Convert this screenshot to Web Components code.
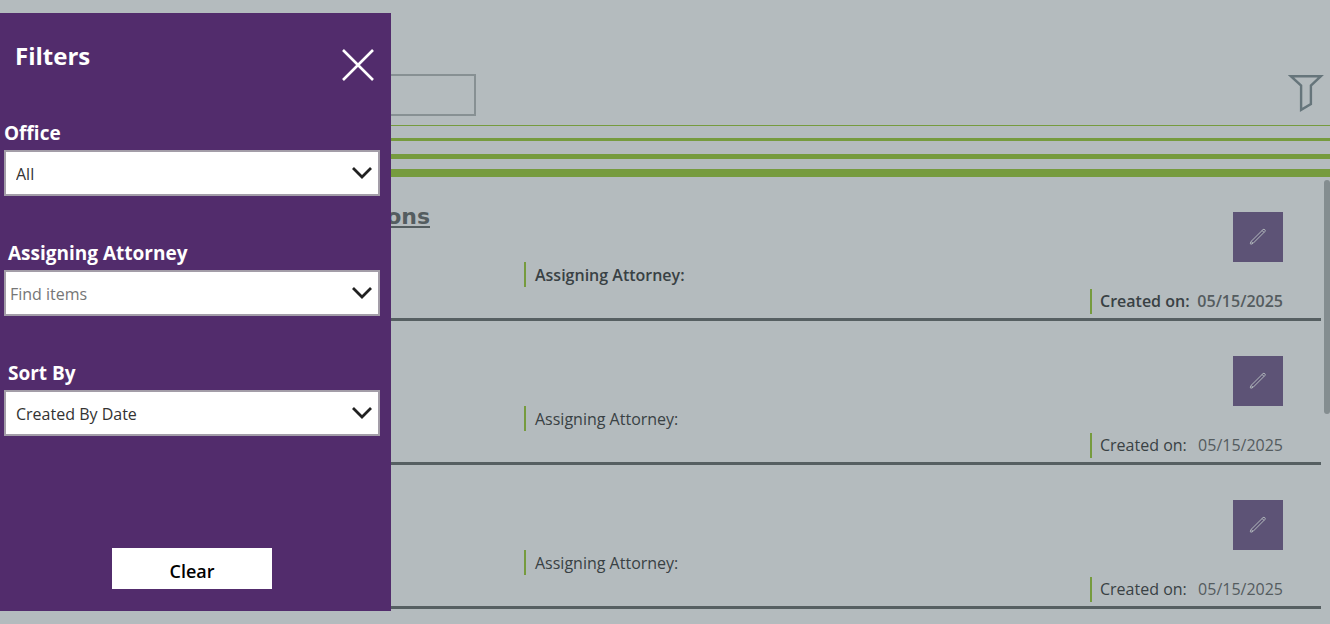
<!DOCTYPE html>
<html lang="en">
<head>
<meta charset="utf-8">
<title>Assignments</title>
<style>
  html, body { margin: 0; min-height: 100%; }
  body {
    background: #b4bbbe;
    color: #394144;
    font-family: "Open Sans", "Noto Sans", sans-serif;
    font-size: 16px;
    overflow: hidden;
    --green: #769b3e;
    --purple: #522c6c;
  }
</style>
</head>
<body>
<app-shell>
  <top-bar></top-bar>
  <stripe-rule></stripe-rule>
  <assignment-list>
    <assignment-row current heading="ons" date="05/15/2025"></assignment-row>
    <assignment-row date="05/15/2025"></assignment-row>
    <assignment-row date="05/15/2025"></assignment-row>
  </assignment-list>
  <filter-panel slot="overlay">
    <filter-select flush label="Office" value="All"></filter-select>
    <filter-combo label="Assigning Attorney" placeholder="Find items"></filter-combo>
    <filter-select label="Sort By" value="Created By Date"></filter-select>
  </filter-panel>
</app-shell>

<script>
const define = (name, render) => customElements.define(name, class extends HTMLElement {
  connectedCallback() {
    if (!this.shadowRoot) this.attachShadow({ mode: "open" }).innerHTML = render(this);
  }
});

define("app-shell", () => `
  <style>
    :host { display: block; position: relative; min-height: 100vh; }
    .overlay { position: absolute; left: 0; top: 13px; }
  </style>
  <main><slot></slot></main>
  <div class="overlay"><slot name="overlay"></slot></div>`);

define("top-bar", () => `
  <style>
    :host { display: flex; justify-content: space-between; align-items: flex-start; box-sizing: border-box; height: 125px; padding: 74px 6px 0 16px; }
    input { box-sizing: border-box; width: 460px; height: 42px; border: 2px solid #879093; background: transparent; font: inherit; padding: 0 8px; }
    button { border: 0; padding: 0; background: none; display: block; }
    svg { display: block; }
  </style>
  <input type="search" aria-label="Search">
  <button type="button" aria-label="Show filters">
    <svg width="36" height="38" viewBox="0 0 36 38" fill="none" stroke="#66757b" stroke-width="2.4"><path d="M2.9 2.2H32.9L22.9 11.6V30L13.1 35.8V11.6Z"/></svg>
  </button>`);

define("stripe-rule", () => `
  <style>
    :host { display: grid; grid-template-rows: 13px 16px 15px 8px; align-items: start; }
    .line { background: var(--green); height: 1px; }
    .thin { height: 3px; }
    .medium { height: 5px; }
    .thick { height: 8px; }
  </style>
  <div class="line"></div><div class="line thin"></div><div class="line medium"></div><div class="line thick"></div>`);

define("assignment-list", () => `
  <style>
    :host { display: block; position: relative; padding-right: 9px; }
    .thumb { position: absolute; right: 0; top: 3px; width: 6px; height: 234px; border-radius: 3px; background: #848d90; }
  </style>
  <slot></slot>
  <div class="thumb"></div>`);

define("assignment-row", el => `
  <style>
    :host { display: grid; grid-template-columns: 524fr 566fr 193px; box-sizing: border-box; height: 144px; padding-right: 38px; border-bottom: 3px solid #565f62; }
    .title { display: grid; justify-items: end; align-items: start; padding: 27px 94px 0 0; }
    a { font: bold 22px/26px "DejaVu Sans", sans-serif; color: #545d60; text-decoration: underline; text-decoration-thickness: 2px; text-underline-offset: 2px; }
    .field { display: flex; align-items: center; box-sizing: border-box; height: 25px; padding-left: 9px; border-left: 2px solid var(--green); font-size: 16px; line-height: 25px; white-space: nowrap; }
    .attorney { margin-top: 85px; padding-top: 2px; }
    .side { display: flex; flex-direction: column; gap: 27px; padding-top: 35px; }
    .side .field { justify-content: space-between; padding-left: 8px; }
    time { color: #545c5f; }
    button { align-self: flex-end; width: 50px; height: 50px; border: 0; padding: 0; background: #5d5376; display: grid; place-items: center; }
    :host([current]) .label { font-weight: 600; }
    :host([current]) time { font-weight: 600; }
  </style>
  <div class="title">${el.getAttribute("heading") ? `<a href="#">${el.getAttribute("heading")}</a>` : ""}</div>
  <div class="field attorney"><span class="label">Assigning Attorney:</span></div>
  <div class="side">
    <button type="button" aria-label="Edit"><svg width="18" height="18" viewBox="0 0 18 18" fill="none" stroke="#b4bbbe" stroke-width="1"><path d="M1.4 15.3L2 13.5L14 1.6Q15 .9 15.8 1.7Q16.6 2.5 15.9 3.5L4 15.4L2 16.2Q1.2 16.2 1.4 15.3ZM13.2 2.6L14.9 4.3M2.4 13.7L3.8 15.1"/></svg></button>
    <div class="field"><span class="label">Created on:</span><time datetime="2025-05-15">${el.getAttribute("date")}</time></div>
  </div>`);

const fieldStyles = `
  :host { display: block; }
  label { display: block; padding-left: 4px; margin-bottom: 4px; font-size: 19px; line-height: 26px; font-weight: 700; color: #fff; }
  :host([flush]) label { padding-left: 0; }
  .box { position: relative; }
  .box svg { position: absolute; right: 7px; top: 15px; pointer-events: none; }
  select, input { box-sizing: border-box; display: block; width: 100%; height: 46px; margin: 0; border: 2px solid #a39da8; border-radius: 0; background: #fff; appearance: none; font: 16px/24px "Open Sans", "Noto Sans", sans-serif; color: #333; outline: 0; }
  select { padding: 2px 40px 0 10px; }
  input { padding: 1px 40px 0 4px; }
  input::placeholder { color: #767676; opacity: 1; }`;
const chevron = `<svg width="22" height="16" viewBox="0 0 22 16" fill="none" stroke="#212121" stroke-width="2.8"><path d="M2 3L11 12L20 3"/></svg>`;

define("filter-select", el => `
  <style>${fieldStyles}</style>
  <label for="control">${el.getAttribute("label")}</label>
  <div class="box"><select id="control"><option>${el.getAttribute("value")}</option></select>${chevron}</div>`);

define("filter-combo", el => `
  <style>${fieldStyles}</style>
  <label for="control">${el.getAttribute("label")}</label>
  <div class="box"><input id="control" type="text" placeholder="${el.getAttribute("placeholder")}">${chevron}</div>`);

define("filter-panel", () => `
  <style>
    :host { display: block; box-sizing: border-box; width: 391px; padding: 0 11px 22px 4px; background: var(--purple); color: #fff; }
    header { display: flex; justify-content: space-between; align-items: flex-start; height: 107px; padding: 0 5px 0 11px; box-sizing: border-box; }
    h2 { margin: 26px 0 0; font-size: 24px; line-height: 34px; font-weight: 700; }
    button { font: inherit; border: 0; padding: 0; }
    .close { margin-top: 35px; background: none; color: #fff; }
    .close svg { display: block; }
    .fields { display: grid; gap: 44px; }
    .clear { display: block; width: 160px; height: 41px; margin: 112px auto 0; background: #fff; color: #000; font-size: 18px; line-height: 24px; font-weight: 600; padding-top: 4px; }
  </style>
  <header>
    <h2>Filters</h2>
    <button class="close" type="button" aria-label="Close filters"><svg width="34" height="34" viewBox="0 0 34 34" fill="none" stroke="#fff" stroke-width="2.6"><path d="M2 2L32 32M32 2L2 32"/></svg></button>
  </header>
  <div class="fields"><slot></slot></div>
  <button class="clear" type="button">Clear</button>`);
</script>
</body>
</html>
